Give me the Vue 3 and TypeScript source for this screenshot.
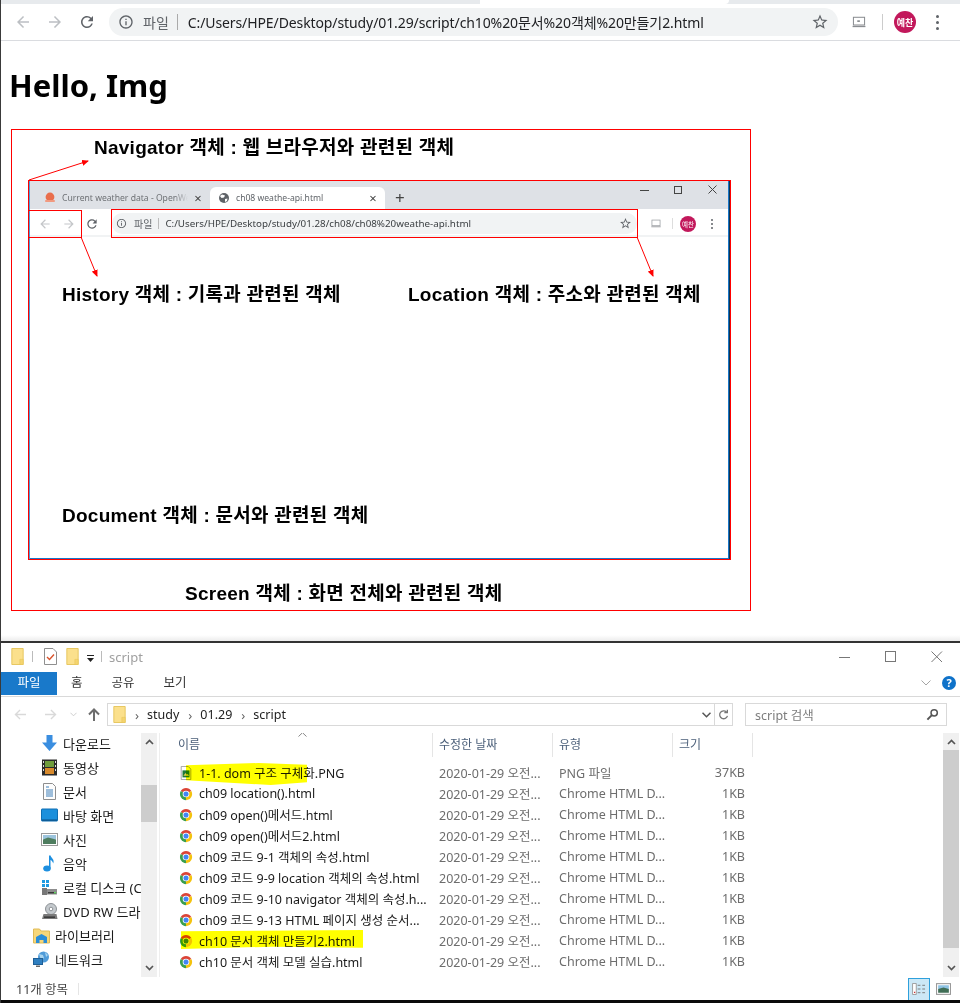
<script setup lang="ts">
const icons = {
  back: 'M20 11H7.83l5.59-5.59L12 4l-8 8 8 8 1.41-1.41L7.83 13H20v-2z',
  forward: 'M12 4l-1.41 1.41L16.17 11H4v2h12.17l-5.58 5.59L12 20l8-8z',
  reload:
    'M17.65 6.35A7.958 7.958 0 0 0 12 4c-4.42 0-7.99 3.58-7.99 8s3.57 8 7.99 8c3.73 0 6.84-2.55 7.73-6h-2.08A5.99 5.99 0 0 1 12 18c-3.31 0-6-2.69-6-6s2.69-6 6-6c1.66 0 3.14.69 4.22 1.78L13 11h7V4l-2.35 2.35z',
  info: 'M11 7h2v2h-2zm0 4h2v6h-2zm1-9C6.48 2 2 6.48 2 12s4.48 10 10 10 10-4.48 10-10S17.52 2 12 2zm0 18c-4.41 0-8-3.59-8-8s3.59-8 8-8 8 3.59 8 8-3.59 8-8 8z',
  star: 'M22 9.24l-7.19-.62L12 2 9.19 8.63 2 9.24l5.46 4.73L5.82 21 12 17.27 18.18 21l-1.63-7.03L22 9.24zM12 15.4l-3.76 2.27 1-4.28-3.32-2.88 4.38-.38L12 6.1l1.71 4.04 4.38.38-3.32 2.88 1 4.28L12 15.4z',
}

const sideItems = [
  { label: '다운로드', icon: 'download', sub: true },
  { label: '동영상', icon: 'video', sub: true },
  { label: '문서', icon: 'docs', sub: true },
  { label: '바탕 화면', icon: 'desktop', sub: true },
  { label: '사진', icon: 'photo', sub: true },
  { label: '음악', icon: 'music', sub: true },
  { label: '로컬 디스크 (C:)', icon: 'disk', sub: true },
  { label: 'DVD RW 드라이브', icon: 'dvd', sub: true },
  { label: '라이브러리', icon: 'library', sub: false },
  { label: '네트워크', icon: 'network', sub: false },
]

const files = [
  { name: '1-1. dom 구조 구체화.PNG', type: 'PNG 파일', size: '37KB', png: true },
  { name: 'ch09 location().html' },
  { name: 'ch09 open()메서드.html' },
  { name: 'ch09 open()메서드2.html' },
  { name: 'ch09 코드 9-1 객체의 속성.html' },
  { name: 'ch09 코드 9-9 location 객체의 속성.html' },
  { name: 'ch09 코드 9-10 navigator 객체의 속성.h...' },
  { name: 'ch09 코드 9-13 HTML 페이지 생성 순서...' },
  { name: 'ch10 문서 객체 만들기2.html', mark: 'long' },
  { name: 'ch10 문서 객체 모델 실습.html' },
  { name: 'ch10 문서 객체 모델.html' },
]
</script>

<template>
  <div class="page">
    <div class="tabstrip"><div class="tab-edge"></div></div>
    <div class="toolbar">
      <svg class="tb-ico dim" viewBox="0 0 24 24"><path :d="icons.back" /></svg>
      <svg class="tb-ico dim" viewBox="0 0 24 24"><path :d="icons.forward" /></svg>
      <svg class="tb-ico" viewBox="0 0 24 24"><path :d="icons.reload" /></svg>
      <div class="omni">
        <svg class="omni-ico" viewBox="0 0 24 24"><path :d="icons.info" /></svg>
        <span class="omni-file">파일</span>
        <i class="omni-sep"></i>
        <span class="omni-url">C:/Users/HPE/Desktop/study/01.29/script/ch10%20문서%20객체%20만들기2.html</span>
        <svg class="omni-star" viewBox="0 0 24 24"><path :d="icons.star" /></svg>
      </div>
      <svg class="cast" viewBox="0 0 16 14">
        <rect x="1.5" y="1.5" width="13" height="9" fill="none" stroke="#8a8d91" stroke-width="1.2" />
        <rect x="0.5" y="11.5" width="15" height="1.5" fill="#8a8d91" />
        <rect x="6" y="5" width="3" height="2" fill="#8a8d91" />
      </svg>
      <i class="tb-sep"></i>
      <span class="avatar">예찬</span>
      <span class="dots"><i></i><i></i><i></i></span>
    </div>

    <main class="content">
      <h1 class="title">Hello, Img</h1>
      <div class="figure">
        <div class="shot">
          <div class="s-tabs">
            <div class="s-tab">
              <svg class="s-fav" viewBox="0 0 12 12">
                <circle cx="6" cy="5" r="4.4" fill="#e96e4c" />
                <rect x="1" y="8" width="10" height="2" rx="0.9" fill="#f19a80" />
              </svg>
              <span class="s-tab-text fade">Current weather data - OpenWe</span>
              <span class="s-close">×</span>
            </div>
            <div class="s-tab active">
              <svg class="s-fav" viewBox="0 0 12 12">
                <circle cx="6" cy="6" r="5" fill="#5f6368" />
                <path d="M4 2.5l3 1-1 2-2.5 0.5L2 4zM7 7l2.5-0.5L9 9 7 10z" fill="#fff" />
              </svg>
              <span class="s-tab-text">ch08 weathe-api.html</span>
              <span class="s-close">×</span>
            </div>
            <span class="s-plus">+</span>
            <div class="s-win">
              <svg viewBox="-14 0 34 12"><path d="M0 6.5h9" stroke="#444" fill="none" /></svg>
              <svg viewBox="-14 0 34 12"><rect x="0.5" y="2.5" width="7" height="7" stroke="#444" fill="none" /></svg>
              <svg viewBox="-14 0 34 12"><path d="M0.5 1.5l8 8M8.5 1.5l-8 8" stroke="#444" fill="none" /></svg>
            </div>
          </div>
          <div class="s-bar">
            <svg class="s-ico dim" viewBox="0 0 24 24"><path :d="icons.back" /></svg>
            <svg class="s-ico dim" viewBox="0 0 24 24"><path :d="icons.forward" /></svg>
            <svg class="s-ico" viewBox="0 0 24 24"><path :d="icons.reload" /></svg>
            <div class="s-omni">
              <svg class="s-omni-ico" viewBox="0 0 24 24"><path :d="icons.info" /></svg>
              <span class="s-file">파일</span>
              <i class="s-omni-sep"></i>
              <span class="s-url">C:/Users/HPE/Desktop/study/01.28/ch08/ch08%20weathe-api.html</span>
              <svg class="s-star" viewBox="0 0 24 24"><path :d="icons.star" /></svg>
            </div>
            <svg class="s-cast" viewBox="0 0 16 14">
              <rect x="1.5" y="1.5" width="13" height="9" fill="none" stroke="#9a9da1" stroke-width="1.2" />
              <rect x="0.5" y="11.5" width="15" height="1.5" fill="#9a9da1" />
            </svg>
            <i class="s-sep"></i>
            <span class="s-avatar">예찬</span>
            <span class="s-dots"><i></i><i></i><i></i></span>
          </div>
        </div>

        <!-- red annotations drawn over the captured browser -->
        <div class="mark history-box"></div>
        <div class="mark location-box"></div>
        <svg class="arrows" viewBox="0 0 738 480">
          <defs>
            <marker id="head" markerWidth="7" markerHeight="6" refX="6" refY="3" orient="auto">
              <path d="M0 0L7 3L0 6z" fill="#f00" stroke="none" />
            </marker>
          </defs>
          <path d="M17 50L76 31" marker-end="url(#head)" />
          <path d="M69 107L85 146" marker-end="url(#head)" />
          <path d="M625 107L641 146" marker-end="url(#head)" />
        </svg>
        <span class="note n-navigator">Navigator 객체 : 웹 브라우저와 관련된 객체</span>
        <span class="note n-history">History 객체 : 기록과 관련된 객체</span>
        <span class="note n-location">Location 객체 : 주소와 관련된 객체</span>
        <span class="note n-document">Document 객체 : 문서와 관련된 객체</span>
        <span class="note n-screen">Screen 객체 : 화면 전체와 관련된 객체</span>
      </div>
    </main>
    <div class="gap-shadow"></div>

    <section class="explorer">
      <div class="ex-title">
        <svg class="folder" viewBox="0 0 13 18"><path d="M0.5 0.5h12v17h-12z" fill="#fbe08c" stroke="#e6c55a" /><path d="M9 12h3.5v5.5H9z" fill="#f5d56f" stroke="#e6c55a" stroke-width="0.6" /></svg>
        <i class="ex-qsep"></i>
        <svg class="qa-doc" viewBox="0 0 13 17">
          <path d="M0.5 0.5h8.5l3.5 3.5v12.5h-12z" fill="#fff" stroke="#8f8f8f" />
          <path d="M3 9l2.5 2.5L10 6.5" fill="none" stroke="#d9532c" stroke-width="1.4" />
        </svg>
        <svg class="folder f2" viewBox="0 0 13 18"><path d="M0.5 0.5h12v17h-12z" fill="#fbe08c" stroke="#e6c55a" /><path d="M9 12h3.5v5.5H9z" fill="#f5d56f" stroke="#e6c55a" stroke-width="0.6" /></svg>
        <svg class="qa-drop" viewBox="0 0 7 7"><path d="M0 0h7v1H0zM0 3h7L3.5 7z" fill="#222" /></svg>
        <i class="ex-qsep s2"></i>
        <span class="ex-name">script</span>
        <div class="ex-win">
          <svg viewBox="0 0 12 12"><path d="M0 6.5h11" stroke="#777" fill="none" /></svg>
          <svg viewBox="0 0 12 12"><rect x="0.5" y="0.5" width="10" height="10" stroke="#777" fill="none" /></svg>
          <svg viewBox="0 0 12 12"><path d="M0.5 0.5l10.5 10.5M11 0.5L0.5 11" stroke="#777" fill="none" /></svg>
        </div>
      </div>
      <div class="ex-ribbon">
        <span class="rb-file">파일</span>
        <span class="rb-tab t1">홈</span>
        <span class="rb-tab t2">공유</span>
        <span class="rb-tab t3">보기</span>
        <svg class="rb-chev" viewBox="0 0 10 6"><path d="M0.5 0.5L5 5l4.5-4.5" fill="none" stroke="#a5a5a5" /></svg>
        <span class="rb-help">?</span>
      </div>
      <div class="ex-nav">
        <svg class="nv dimmer" viewBox="0 0 14 12"><path d="M13 6H2M6.5 1L1.5 6l5 5" fill="none" stroke="currentColor" stroke-width="1.5" /></svg>
        <svg class="nv dimmer n2" viewBox="0 0 14 12"><path d="M1 6h11M7.5 1l5 5-5 5" fill="none" stroke="currentColor" stroke-width="1.5" /></svg>
        <svg class="nv-down" viewBox="0 0 8 5"><path d="M0.5 0.5L4 4l3.5-3.5" fill="none" stroke="#c8c8c8" /></svg>
        <svg class="nv-up" viewBox="0 0 12 13"><path d="M6 13V2M1 6.5L6 1.5l5 5" fill="none" stroke="#6d6d6d" stroke-width="2" /></svg>
        <div class="addr">
          <svg class="folder f3" viewBox="0 0 13 18"><path d="M0.5 0.5h12v17h-12z" fill="#fbe08c" stroke="#e6c55a" /><path d="M9 12h3.5v5.5H9z" fill="#f5d56f" stroke="#e6c55a" stroke-width="0.6" /></svg>
          <span class="crumb-sep">›</span><span class="crumb">study</span>
          <span class="crumb-sep">›</span><span class="crumb">01.29</span>
          <span class="crumb-sep">›</span><span class="crumb">script</span>
          <svg class="addr-chev" viewBox="0 0 9 6"><path d="M0.5 0.8L4.5 4.8l4-4" fill="none" stroke="#555" stroke-width="1.5" /></svg>
          <span class="addr-refresh">
            <svg viewBox="0 0 12 14"><path d="M9.5 3.6A4.6 4.6 0 1 0 10.6 8M10.5 0.8v3.4H7" fill="none" stroke="#777" stroke-width="1.5" /></svg>
          </span>
        </div>
        <div class="search">
          <span>script 검색</span>
          <svg viewBox="0 0 14 14"><circle cx="8.8" cy="5.2" r="3.4" fill="none" stroke="#555" stroke-width="1.6" /><path d="M6.3 7.7L1.5 12.5" stroke="#555" stroke-width="2.2" /></svg>
        </div>
      </div>

      <div class="ex-body">
        <div class="side">
          <div v-for="item in sideItems" :key="item.label" class="side-row" :class="{ sub: item.sub }">
            <svg class="side-ico" viewBox="0 0 17 17">
              <template v-if="item.icon === 'download'">
                <path d="M5.5 0h6v7.5H16L8.5 16 1 7.5h4.5z" fill="#3a8ee0" />
              </template>
              <template v-else-if="item.icon === 'video'">
                <rect x="1" y="0.5" width="15" height="16" fill="#2b2b2b" />
                <rect x="4" y="2" width="9" height="6" fill="#6f9d3c" />
                <rect x="4" y="9" width="9" height="6" fill="#d88a2c" />
                <path d="M2 2h1v2H2zM2 6h1v2H2zM2 10h1v2H2zM14 2h1v2h-1zM14 6h1v2h-1zM14 10h1v2h-1z" fill="#ddd" />
              </template>
              <template v-else-if="item.icon === 'docs'">
                <path d="M2.5 0.5h9l3 3v13h-12z" fill="#fdfdfd" stroke="#8e8e8e" />
                <path d="M5 4h3M5 7h7M5 9h7M5 11h7M5 13h7" stroke="#3f7fb8" />
              </template>
              <template v-else-if="item.icon === 'desktop'">
                <rect x="0.5" y="2" width="16" height="12" rx="0.5" fill="#1c90dc" stroke="#0f6fb4" />
                <rect x="1" y="12.5" width="15" height="1.2" fill="#0b4f84" />
              </template>
              <template v-else-if="item.icon === 'photo'">
                <rect x="0.5" y="2.5" width="16" height="12" fill="#fff" stroke="#9a9a9a" />
                <rect x="2" y="4" width="13" height="4.5" fill="#9cc4dd" />
                <path d="M2 8.5l5-2 8 2V13H2z" fill="#4e7d5f" />
              </template>
              <template v-else-if="item.icon === 'music'">
                <ellipse cx="6" cy="13.5" rx="3.8" ry="3" fill="#1d8fe0" />
                <path d="M8 13V0.5h1.6c.4 2.5 4.4 4 2.6 8-.2-2-2.2-3.3-2.7-3.5V13.5z" fill="#1d8fe0" />
              </template>
              <template v-else-if="item.icon === 'disk'">
                <path d="M1 1h3v3H1zM5 1h3v3H5zM1 5h3v3H1zM5 5h3v3H5z" fill="#1f9ae0" />
                <rect x="1" y="9" width="5" height="7" fill="#777" />
                <rect x="6" y="10" width="10" height="5.5" fill="#8d8d8d" />
                <rect x="7" y="13" width="8" height="1.4" fill="#3a3a3a" />
                <rect x="13" y="13" width="2" height="1.4" fill="#5fd35f" />
              </template>
              <template v-else-if="item.icon === 'dvd'">
                <circle cx="10" cy="6" r="5.5" fill="#c4c9cd" stroke="#8d9296" />
                <circle cx="10" cy="6" r="1.8" fill="#fff" stroke="#8d9296" />
                <path d="M2.5 11h13l1 5H1z" fill="#7b7b7b" />
                <rect x="3" y="13.5" width="11" height="1.3" fill="#2e2e2e" />
              </template>
              <template v-else-if="item.icon === 'library'">
                <path d="M0.5 2h6l1.5 2h8.5v12H0.5z" fill="#f7d77a" stroke="#e0bb56" />
                <path d="M3 16v-6l5.5-3 5.5 3v6h-3.5v-3h-4v3z" fill="#2b8ed8" />
              </template>
              <template v-else>
                <circle cx="10.5" cy="6" r="5.5" fill="#4e9bd9" />
                <path d="M6 3l4 1 1 3-3 2zM12 1l3 3-2 2z" fill="#a7d3ee" />
                <rect x="0.5" y="7.5" width="9" height="6" fill="#2f7fc0" stroke="#1f5f96" />
                <rect x="3" y="14.5" width="4" height="1.5" fill="#666" />
              </template>
            </svg>
            <span class="side-label">{{ item.label }}</span>
          </div>
        </div>
        <div class="vbar side-bar">
          <svg viewBox="0 0 9 6"><path d="M1 5l3.5-3.5L8 5" fill="none" stroke="#555" stroke-width="1.7" /></svg>
          <div class="track"><div class="thumb"></div></div>
          <svg viewBox="0 0 9 6"><path d="M1 1l3.5 3.5L8 1" fill="none" stroke="#555" stroke-width="1.7" /></svg>
        </div>

        <div class="list">
          <div class="list-head">
            <span class="h-name">이름
              <svg class="sort" viewBox="0 0 9 5"><path d="M0.5 4.5L4.5 0.7l4 3.8" fill="none" stroke="#888" /></svg>
            </span>
            <span class="h-cell">수정한 날짜</span>
            <span class="h-cell">유형</span>
            <span class="h-cell">크기</span>
          </div>
          <div class="list-rows">
            <div v-for="f in files" :key="f.name" class="file-row">
              <div class="f-name">
                <svg v-if="f.png" class="f-ico" viewBox="0 0 14 16">
                  <path d="M1.5 0.5h8l3 3v12h-11z" fill="#fff" stroke="#9a9a9a" />
                  <rect x="3" y="5" width="8" height="8" fill="#1f7a3a" />
                  <path d="M4 11l2.5-3 1.5 2 1-1 1.5 2z" fill="#e8d24a" />
                </svg>
                <svg v-else class="f-ico" viewBox="0 0 16 16">
                  <path d="M8 8L2 4.5A7 7 0 0 1 14.06 4.5z" fill="#db4437" />
                  <path d="M8 8L14.06 4.5A7 7 0 0 1 8 15z" fill="#f4c20d" />
                  <path d="M8 8L8 15A7 7 0 0 1 2 4.5z" fill="#3a9e4f" />
                  <circle cx="8" cy="8" r="3.8" fill="#fff" />
                  <circle cx="8" cy="8" r="2.9" fill="#4285f4" />
                </svg>
                <span>{{ f.name }}</span>
                <!-- highlighter stroke painted over the name -->
                <i v-if="f.png" class="marker m-short"></i>
                <i v-if="f.mark" class="marker m-long"></i>
              </div>
              <span class="f-cell">2020-01-29 오전...</span>
              <span class="f-cell">{{ f.type || 'Chrome HTML D...' }}</span>
              <span class="f-size">{{ f.size || '1KB' }}</span>
            </div>
          </div>
        </div>
        <div class="vbar main-bar">
          <svg viewBox="0 0 9 6"><path d="M1 5l3.5-3.5L8 5" fill="none" stroke="#555" stroke-width="1.7" /></svg>
          <div class="track"><div class="thumb"></div></div>
          <svg viewBox="0 0 9 6"><path d="M1 1l3.5 3.5L8 1" fill="none" stroke="#555" stroke-width="1.7" /></svg>
        </div>
      </div>

      <div class="ex-status">
        <span class="count">11개 항목</span>
        <i class="st-sep"></i>
        <span class="view on">
          <svg viewBox="0 0 16 13">
            <path d="M0.5 0.5h4v12h-4z" fill="#fff" stroke="#999" />
            <path d="M6 2.5h3M11 2.5h3M6 6.5h3M11 6.5h3M6 10.5h3M11 10.5h3" stroke="#777" />
            <rect x="2" y="9.5" width="1.4" height="1.4" fill="#c33" />
          </svg>
        </span>
        <span class="view">
          <svg viewBox="0 0 14 11">
            <rect x="0.5" y="0.5" width="13" height="10" fill="#fff" stroke="#999" />
            <rect x="2" y="2" width="10" height="3.5" fill="#8fc3e4" />
            <path d="M2 5.5l5-1.5 5 1.5V9H2z" fill="#3f6d55" />
          </svg>
        </span>
      </div>
      <div class="taskbar"></div>
    </section>
  </div>
</template>

<style scoped>
.page {
  width: 960px;
  height: 1003px;
  box-sizing: border-box;
  border-left: 1px solid #3a3a3a;
  background: #fff;
  display: flex;
  flex-direction: column;
  overflow: hidden;
  font-family: "Noto Sans", "Noto Sans CJK KR", sans-serif;
  color: #202124;
}

/* browser chrome */
.tabstrip {
  height: 4px;
  background: #e7eaed;
  flex: none;
}
.tab-edge {
  width: 249px;
  height: 4px;
  margin-left: 479px;
  background: #fff;
  border-radius: 0 0 6px 0;
}
.toolbar {
  height: 36px;
  flex: none;
  display: flex;
  align-items: center;
  border-bottom: 1px solid #dadce0;
  box-sizing: content-box;
}
.tb-ico {
  width: 18px;
  height: 18px;
  fill: #5f6368;
  margin-left: 14px;
}
.tb-ico:first-child {
  margin-left: 13px;
}
.tb-ico.dim {
  fill: #bcbfc3;
}
.omni {
  margin-left: 13px;
  width: 729px;
  height: 28px;
  border-radius: 14px;
  background: #f1f3f4;
  display: flex;
  align-items: center;
  padding-left: 9px;
  box-sizing: border-box;
}
.omni-ico {
  width: 16px;
  height: 16px;
  fill: #5f6368;
}
.omni-file {
  margin-left: 9px;
  font-size: 14px;
  color: #5f6368;
}
.omni-sep {
  width: 1px;
  height: 16px;
  background: #aaa;
  margin: 0 10px 0 8px;
}
.omni-url {
  font-size: 14px;
  letter-spacing: -0.1px;
  color: #202124;
  white-space: nowrap;
}
.omni-star {
  width: 18px;
  height: 18px;
  fill: #5f6368;
  margin-left: auto;
  margin-right: 9px;
}
.cast {
  width: 14px;
  height: 12px;
  margin-left: 14px;
}
.tb-sep {
  width: 1px;
  height: 16px;
  background: #ccc;
  margin-left: 16px;
}
.avatar {
  width: 22px;
  height: 22px;
  margin-left: 11px;
  border-radius: 50%;
  background: #c2185b;
  color: #fff;
  font-size: 9px;
  font-weight: 700;
  display: flex;
  align-items: center;
  justify-content: center;
}
.dots {
  display: flex;
  flex-direction: column;
  gap: 3px;
  margin-left: 20px;
}
.dots i {
  width: 3px;
  height: 3px;
  border-radius: 50%;
  background: #5f6368;
}

/* page body */
.content {
  height: 594px;
  flex: none;
  padding-left: 10px;
}
.title {
  margin: 0 0 0 -2px;
  height: 88px;
  line-height: 89px;
  font-size: 31px;
  font-weight: 700;
  color: #000;
  font-family: "Noto Sans", "Noto Sans CJK KR", sans-serif;
}
.gap-shadow {
  height: 6px;
  flex: none;
  background: linear-gradient(#fff, #ececec);
}
.figure {
  position: relative;
  width: 740px;
  height: 482px;
  box-sizing: border-box;
  border: 1px solid #f00;
  padding: 50px 0 0 16px;
}
.shot {
  width: 703px;
  height: 380px;
  box-sizing: border-box;
  border: 1px solid #f00;
  box-shadow: inset 1px 0 0 #4a9fdc, inset -1px 0 0 #12344f, inset -2px 0 0 #1976c8, inset 0 -1px 0 #1976c8;
  background: #fff;
}
.s-tabs {
  height: 28px;
  margin-right: 2px;
  margin-left: 1px;
  background: #dee1e6;
  display: flex;
  align-items: flex-end;
  position: relative;
  font-family: "Noto Sans", "Noto Sans CJK KR", sans-serif;
}
.s-tab {
  width: 175px;
  height: 22px;
  display: flex;
  align-items: center;
  padding-left: 8px;
  box-sizing: border-box;
  font-size: 8.6px;
  color: #6d7074;
}
.s-tab:first-child {
  width: 180px;
  padding-left: 14px;
}
.s-tab.active {
  background: #fff;
  border-radius: 6px 6px 0 0;
  color: #5f6368;
}
.s-fav {
  width: 12px;
  height: 12px;
  flex: none;
  margin-right: 6px;
}
.s-tab-text {
  flex: 1;
  overflow: hidden;
  white-space: nowrap;
}
.s-tab-text.fade {
  -webkit-mask-image: linear-gradient(to left, transparent, #000 14px);
  mask-image: linear-gradient(to left, transparent, #000 14px);
}
.s-close {
  width: 12px;
  font-size: 13px;
  line-height: 12px;
  color: #444;
  margin: 0 6px 0 4px;
  text-align: center;
}
.s-plus {
  margin: 0 0 0 10px;
  font-size: 17px;
  line-height: 23px;
  color: #444;
}
.s-win {
  margin-left: auto;
  align-self: flex-start;
  display: flex;
  padding-top: 3px;
}
.s-win svg {
  width: 34px;
  height: 12px;
}
.s-bar {
  height: 28px;
  margin: 0 2px 0 1px;
  padding-top: 3px;
  display: flex;
  align-items: center;
  border-bottom: 2px solid #f1f3f4;
  box-sizing: border-box;
}
.s-ico {
  width: 14px;
  height: 14px;
  fill: #5f6368;
  margin-left: 10px;
}
.s-ico:first-child {
  margin-left: 8px;
}
.s-ico:nth-child(3) {
  margin-left: 9px;
}
.s-ico.dim {
  fill: #c4c6c9;
}
.s-omni {
  margin-left: 13px;
  width: 525px;
  height: 21px;
  background: #f1f3f4;
  border-radius: 10px;
  display: flex;
  align-items: center;
  padding-left: 2px;
  box-sizing: border-box;
}
.s-omni-ico {
  width: 11px;
  height: 11px;
  fill: #5f6368;
  margin-left: 2px;
}
.s-file {
  font-size: 10px;
  color: #5f6368;
  margin-left: 7px;
}
.s-omni-sep {
  width: 1px;
  height: 11px;
  background: #bbb;
  margin: 0 6px;
}
.s-url {
  font-size: 9.8px;
  color: #3c4043;
  white-space: nowrap;
}
.s-star {
  width: 13px;
  height: 13px;
  fill: #5f6368;
  margin-left: auto;
  margin-right: 5px;
}
.s-cast {
  width: 10px;
  height: 9px;
  margin-left: 14px;
}
.s-sep {
  width: 1px;
  height: 11px;
  background: #ddd;
  margin-left: 11px;
}
.s-avatar {
  width: 16px;
  height: 16px;
  margin-left: 7px;
  border-radius: 50%;
  background: #c2185b;
  color: #fff;
  font-size: 6.5px;
  display: flex;
  align-items: center;
  justify-content: center;
}
.s-dots {
  display: flex;
  flex-direction: column;
  gap: 2px;
  margin-left: 15px;
}
.s-dots i {
  width: 2px;
  height: 2px;
  background: #5f6368;
  border-radius: 50%;
}
.mark {
  position: absolute;
  box-sizing: border-box;
  border: 1px solid #f00;
}
.history-box {
  left: 16px;
  top: 80px;
  width: 54px;
  height: 28px;
}
.location-box {
  left: 99px;
  top: 79px;
  width: 527px;
  height: 29px;
}
.arrows {
  position: absolute;
  left: 0;
  top: 0;
  width: 738px;
  height: 480px;
  fill: none;
  stroke: #f00;
  stroke-width: 1;
  pointer-events: none;
}
.note {
  position: absolute;
  font-family: "Liberation Sans", "Noto Sans CJK KR", sans-serif;
  font-size: 19px;
  font-weight: 700;
  line-height: 24px;
  letter-spacing: 0.25px;
  color: #000;
  white-space: nowrap;
}
.n-navigator { left: 82px; top: 6px; }
.n-history { left: 50px; top: 153px; }
.n-location { left: 396px; top: 153px; }
.n-document { left: 50px; top: 374px; }
.n-screen { left: 173px; top: 452px; }

/* file explorer */
.explorer {
  flex: 1;
  min-height: 0;
  display: flex;
  flex-direction: column;
  border-top: 2px solid #333;
  font-size: 12.5px;
  color: #1a1a1a;
}
.ex-title {
  height: 29px;
  display: flex;
  align-items: center;
  flex: none;
  padding-bottom: 2px;
  box-sizing: border-box;
}
.folder {
  width: 13px;
  height: 17px;
  margin-left: 10px;
}
.ex-qsep {
  width: 1px;
  height: 11px;
  background: #bbb;
  margin-left: 8px;
}
.qa-doc {
  width: 13px;
  height: 17px;
  margin-left: 11px;
}
.f2 {
  margin-left: 9px;
}
.qa-drop {
  width: 7px;
  height: 7px;
  margin-left: 8px;
  margin-top: 3px;
}
.ex-qsep.s2 {
  margin-left: 7px;
}
.ex-name {
  margin-left: 7px;
  font-size: 13px;
  color: #a0a0a0;
}
.ex-win {
  margin-left: auto;
  display: flex;
  gap: 34px;
  margin-right: 17px;
}
.ex-win svg {
  width: 12px;
  height: 12px;
}
.ex-ribbon {
  height: 25px;
  flex: none;
  display: flex;
  align-items: flex-start;
  border-bottom: 1px solid #d9d9d9;
  box-sizing: border-box;
  font-size: 12.5px;
  line-height: 22px;
}
.rb-file {
  width: 56px;
  height: 23px;
  background: #1979ca;
  color: #fff;
  text-align: center;
}
.rb-tab {
  color: #333;
}
.t1 { margin-left: 14px; }
.t2 { margin-left: 29px; }
.t3 { margin-left: 29px; }
.rb-chev {
  width: 10px;
  height: 6px;
  margin-left: auto;
  margin-top: 8px;
}
.rb-help {
  width: 14px;
  height: 14px;
  margin: 4px 4px 0 11px;
  border-radius: 50%;
  background: #0f72c9;
  color: #fff;
  font-size: 11px;
  font-weight: 700;
  line-height: 14px;
  text-align: center;
}
.ex-nav {
  height: 36px;
  flex: none;
  display: flex;
  align-items: center;
  padding-bottom: 1px;
  box-sizing: border-box;
}
.nv {
  width: 13px;
  height: 11px;
  margin-left: 13px;
  color: #d9d9d9;
}
.nv.n2 {
  margin-left: 17px;
}
.nv-down {
  width: 7px;
  height: 5px;
  margin-left: 13px;
}
.nv-up {
  width: 12px;
  height: 13px;
  margin-left: 11px;
}
.addr {
  margin-left: 7px;
  width: 626px;
  height: 23px;
  border: 1px solid #d9d9d9;
  box-sizing: border-box;
  display: flex;
  align-items: center;
  font-size: 12.5px;
}
.f3 {
  margin-left: 5px;
}
.crumb-sep {
  margin: 0 8px 0 9px;
  color: #666;
  font-size: 13px;
}
.crumb {
  color: #222;
}
.addr-chev {
  width: 9px;
  height: 6px;
  margin-left: auto;
  margin-right: 3px;
}
.addr-refresh {
  width: 17px;
  height: 21px;
  border-left: 1px solid #d9d9d9;
  display: flex;
  align-items: center;
  justify-content: center;
}
.addr-refresh svg {
  width: 11px;
  height: 12px;
}
.search {
  margin-left: 12px;
  width: 202px;
  height: 23px;
  border: 1px solid #d9d9d9;
  box-sizing: border-box;
  display: flex;
  align-items: center;
  padding: 0 7px 0 9px;
  color: #7d7d7d;
  font-size: 12.5px;
}
.search svg {
  width: 13px;
  height: 13px;
  margin-left: auto;
}
.ex-body {
  height: 244px;
  flex: none;
  display: flex;
  overflow: hidden;
}
.side {
  width: 140px;
  flex: none;
  overflow: hidden;
  margin-top: -2px;
}
.side-row {
  height: 24px;
  display: flex;
  align-items: center;
  padding-left: 32px;
  white-space: nowrap;
  font-size: 13px;
}
.side-row.sub {
  padding-left: 40px;
}
.side-ico {
  width: 17px;
  height: 17px;
  flex: none;
  margin-right: 5px;
}
.vbar {
  width: 16px;
  flex: none;
  background: #f0f0f0;
  display: flex;
  flex-direction: column;
  align-items: center;
  padding: 6px 0;
  box-sizing: border-box;
}
.vbar > svg {
  width: 9px;
  height: 6px;
  flex: none;
}
.track {
  flex: 1;
  width: 100%;
  position: relative;
}
.thumb {
  position: absolute;
  left: 0;
  right: 0;
  background: #cdcdcd;
}
.side-bar .thumb {
  top: 40px;
  height: 37px;
}
.main-bar .thumb {
  top: 5px;
  height: 198px;
}
.side-bar {
  margin-right: 2px;
}
.main-bar {
  margin-right: 1px;
}
.list {
  flex: 1;
  min-width: 0;
  border-left: 1px solid #eee;
  display: flex;
  flex-direction: column;
  overflow: hidden;
}
.list-head {
  height: 24px;
  flex: none;
  display: grid;
  grid-template-columns: 273px 120px 120px 80px;
  color: #4c607a;
  font-size: 12px;
  line-height: 23px;
}
.h-name {
  position: relative;
  padding-left: 18px;
  border-right: 1px solid #e5e5e5;
}
.h-cell {
  padding-left: 6px;
  border-right: 1px solid #e5e5e5;
}
.sort {
  position: absolute;
  left: 138px;
  top: -1px;
  width: 9px;
  height: 5px;
}
.list-rows {
  padding-top: 5px;
}
.file-row {
  height: 21px;
  display: grid;
  grid-template-columns: 273px 120px 120px 80px;
  align-items: center;
  white-space: nowrap;
}
.f-name {
  position: relative;
  display: flex;
  align-items: center;
  padding-left: 19px;
  font-size: 12.5px;
  color: #1a1a1a;
}
.f-ico {
  width: 14px;
  height: 14px;
  flex: none;
  margin-right: 6px;
}
.marker {
  position: absolute;
  background: #ff0;
  mix-blend-mode: multiply;
}
.m-short {
  left: 26px;
  top: 0;
  width: 121px;
  height: 22px;
  clip-path: polygon(0 10%, 60% 0, 100% 8%, 100% 88%, 70% 100%, 0 78%);
}
.m-long {
  left: 21px;
  top: -1px;
  width: 182px;
  height: 19px;
  clip-path: polygon(0 6%, 100% 0, 100% 94%, 50% 88%, 0 100%);
}
.f-cell {
  padding-left: 6px;
  color: #6d6d6d;
  font-size: 12.5px;
}
.f-size {
  padding-right: 8px;
  text-align: right;
  color: #6d6d6d;
  font-size: 12.5px;
}
.ex-status {
  height: 23px;
  flex: none;
  display: flex;
  align-items: center;
  font-size: 12.5px;
  color: #444;
}
.count {
  margin-left: 15px;
}
.st-sep {
  width: 1px;
  height: 12px;
  background: #e5e5e5;
  margin-left: 10px;
}
.view {
  display: flex;
  align-items: center;
  justify-content: center;
  width: 22px;
  height: 22px;
  box-sizing: border-box;
  margin-left: 2px;
}
.view.on {
  margin-left: auto;
  background: #cce8f6;
  border: 1px solid #2ea0dc;
  border-width: 1px 1px 0;
}
.view svg {
  width: 15px;
  height: 12px;
}
.view:last-child {
  margin-right: 6px;
}
.taskbar {
  height: 3px;
  flex: none;
  background: #0a0a0a;
}
</style>
